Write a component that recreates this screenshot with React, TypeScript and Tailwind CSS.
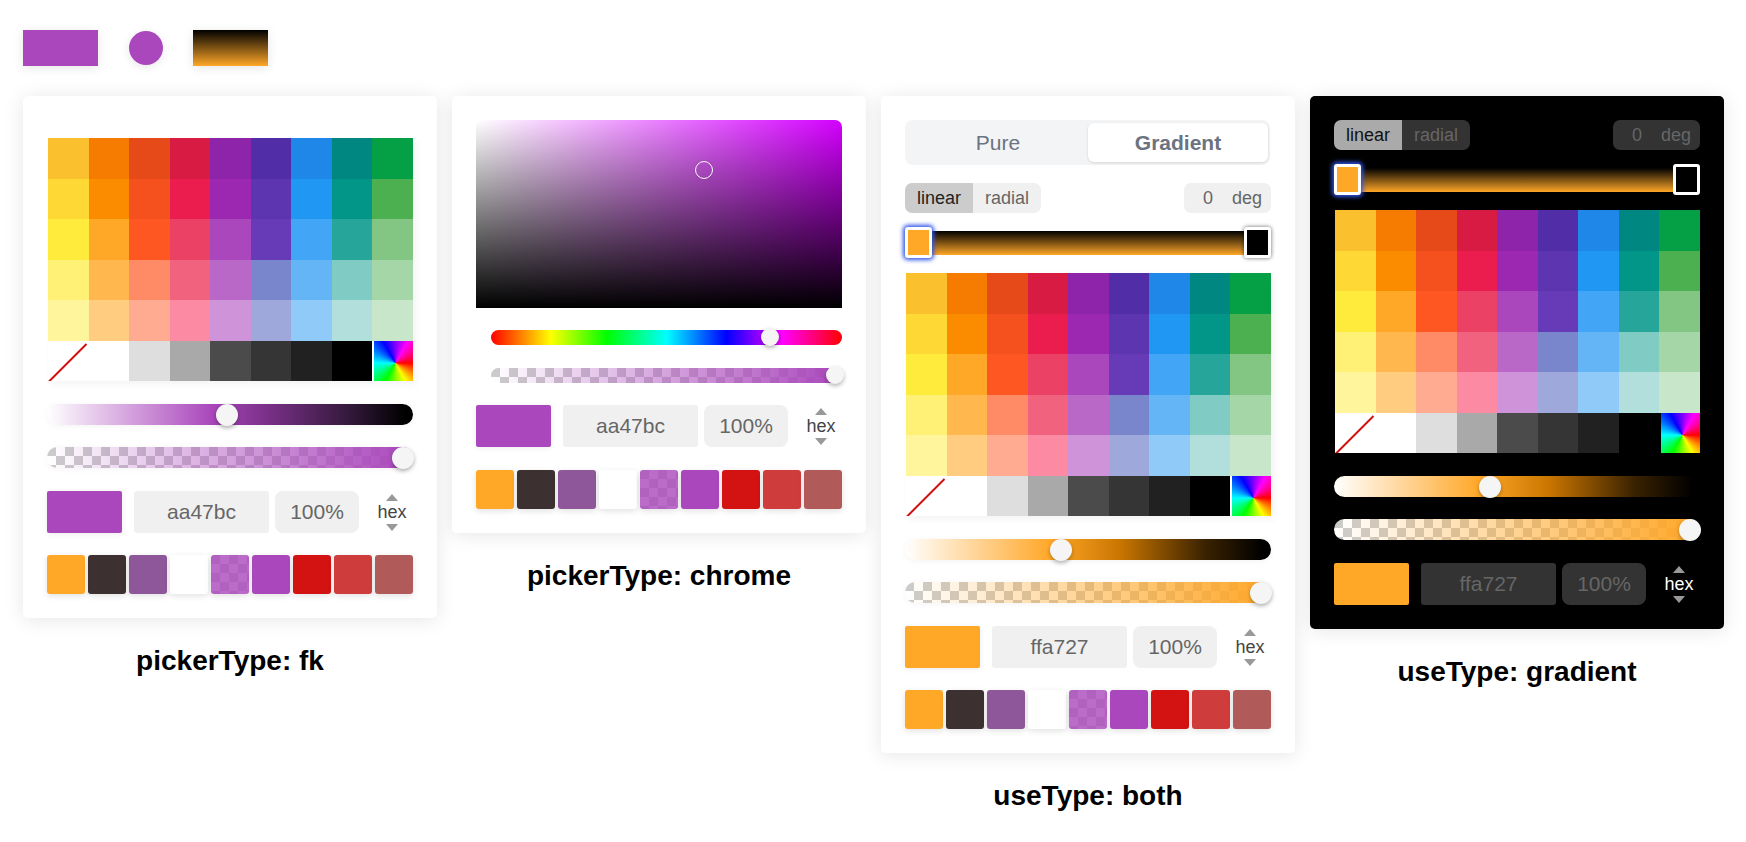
import React from "react";

const ROWS = [
  ["#fbc02d", "#f57c00", "#e64a19", "#d81b43", "#8e24aa", "#512da7", "#1f87e8", "#008781", "#05a045"],
  ["#fed835", "#fb8c00", "#f5511e", "#eb1d4e", "#9c27b0", "#5e35b1", "#2097f3", "#029688", "#4cb050"],
  ["#ffeb3c", "#ffa727", "#fe5722", "#eb4165", "#aa47bc", "#673bb7", "#42a5f6", "#26a59a", "#83c683"],
  ["#fff176", "#ffb74e", "#ff8a66", "#f1627e", "#b968c7", "#7986cc", "#64b5f6", "#80cbc4", "#a5d6a7"],
  ["#fff59c", "#ffcc80", "#ffab91", "#fb8aa2", "#ce93d8", "#9fa8da", "#90caf9", "#b2dfdc", "#c8e6ca"],
];
const GRAYS = ["#ffffff", "#dedede", "#a9a9a9", "#4b4b4b", "#353535", "#212121", "#000000"];
const PRESETS = ["#ffa727", "#3d3030", "#8e5799", "#ffffff", "", "#aa47bc", "#d31212", "#cf3c3c", "#b05a5a"];

const PURPLE = {
  swatch: "bg-[#aa47bc]",
  text: "aa47bc",
  hue: "bg-[linear-gradient(to_right,#ffffff,#aa47bc_45%,#7a3088_60%,#351a3d_82%,#000000_98%)]",
  alpha:
    "bg-[linear-gradient(to_right,rgba(170,71,188,0),#aa47bc),conic-gradient(#fff_25%,#ccc_0_50%,#fff_0_75%,#ccc_0)] bg-[length:100%_100%,18px_18px]",
};
const ORANGE = {
  swatch: "bg-[#ffa727]",
  text: "ffa727",
  hue: "bg-[linear-gradient(to_right,#ffffff,#ffa727_40%,#c87500_59%,#3a2200_82%,#000000_98%)]",
  alpha:
    "bg-[linear-gradient(to_right,rgba(255,167,39,0),#ffa727),conic-gradient(#fff_25%,#ccc_0_50%,#fff_0_75%,#ccc_0)] bg-[length:100%_100%,18px_18px]",
};
type Tone = typeof PURPLE;

function Thumb({ left, size, top }: { left: number; size: string; top: string }) {
  return (
    <div
      className={`absolute ${size} ${top} rounded-full bg-[#f5f5f5] shadow-[0_2px_4px_rgba(0,0,0,0.3)]`}
      style={{ left }}
    />
  );
}

function Palette({ dark }: { dark: boolean }) {
  return (
    <div className="ml-px h-[243px] grid grid-cols-9 grid-rows-6 shadow-[3px_3px_8px_rgba(0,0,0,0.05)]">
      {ROWS.flat().map((c, i) => (
        <div key={i} style={{ backgroundColor: c }} />
      ))}
      <div className="bg-white">
        <svg viewBox="0 0 40 40" className="w-full h-full block">
          <line x1="1" y1="40" x2="38" y2="3" stroke="#d40f0f" strokeWidth="2" />
        </svg>
      </div>
      {GRAYS.map((c, i) => (
        <div key={i} style={{ backgroundColor: c }} />
      ))}
      <div className={dark ? "bg-black pl-[1.5px]" : "bg-white pl-[1.5px]"}>
        <div className="w-full h-full bg-[conic-gradient(from_90deg_at_55%_55%,#ff0000,#ffff00,#00ff00,#00ffff,#0000ff,#ff00ff,#ff0000)]" />
      </div>
    </div>
  );
}

function Sliders({ tone, thumb }: { tone: Tone; thumb: number }) {
  return (
    <>
      <div className={`relative mt-[23px] h-[21px] rounded-full shadow-[0_1px_6px_rgba(0,0,0,0.05)] ${tone.hue}`}>
        <Thumb left={thumb} size="w-[22px] h-[22px]" top="top-0" />
      </div>
      <div className={`relative mt-[22px] h-[21px] rounded-full shadow-[0_1px_6px_rgba(0,0,0,0.05)] ${tone.alpha}`}>
        <Thumb left={345} size="w-[22px] h-[22px]" top="top-0" />
      </div>
    </>
  );
}

function InputRow({ tone, dark, mt }: { tone: Tone; dark: boolean; mt: string }) {
  const box = dark ? "bg-[#333333] text-[#666666]" : "bg-[#f0f0f0] text-[#666666]";
  return (
    <div className={`flex items-center h-[42px] ${mt}`}>
      <div className={`w-[75px] h-full rounded-[2px] shadow-[0_1px_6px_rgba(0,0,0,0.08)] ${tone.swatch}`} />
      <div className={`ml-3 w-[135px] h-full rounded-[3px] flex items-center justify-center text-[21px] ${box}`}>{tone.text}</div>
      <div className={`ml-1.5 w-[84px] h-full rounded-[8px] flex items-center justify-center text-[21px] ${box}`}>100%</div>
      <div className="flex-1 flex flex-col items-center pl-[12px]">
        <svg width="12" height="7" viewBox="0 0 12 7" className="block">
          <polygon points="6,0 12,7 0,7" fill="#999999" />
        </svg>
        <div className={`text-[18px] leading-[24px] my-[-0.5px] ${dark ? "text-white" : "text-[#444444]"}`}>hex</div>
        <svg width="12" height="7" viewBox="0 0 12 7" className="block">
          <polygon points="0,0 12,0 6,7" fill="#999999" />
        </svg>
      </div>
    </div>
  );
}

function Presets() {
  return (
    <div className="mt-[22px] flex justify-between h-[39px]">
      {PRESETS.map((c, i) =>
        c ? (
          <div key={i} className="w-[38px] h-full rounded-[3px] shadow-[0_2px_6px_rgba(0,0,0,0.12)]" style={{ backgroundColor: c }} />
        ) : (
          <div
            key={i}
            className="w-[38px] h-full rounded-[3px] shadow-[0_2px_6px_rgba(0,0,0,0.12)] bg-[linear-gradient(rgba(170,71,188,0.8),rgba(170,71,188,0.8)),conic-gradient(#fff_25%,#ccc_0_50%,#fff_0_75%,#ccc_0)] bg-[length:100%_100%,18px_18px]"
          />
        )
      )}
    </div>
  );
}

function GradientControls({ dark }: { dark: boolean }) {
  const idle = dark ? "bg-[#333333] text-[#666666]" : "bg-[#f0f0f0] text-[#666666]";
  const active = dark ? "bg-[#aaaaaa] text-[#111111]" : "bg-[#cccccc] text-[#222222]";
  return (
    <>
      <div className="flex justify-between h-[30px] text-[18px]">
        <div className="flex rounded-[7px] overflow-hidden">
          <div className={`w-[68px] flex items-center justify-center ${active}`}>linear</div>
          <div className={`w-[68px] flex items-center justify-center ${idle}`}>radial</div>
        </div>
        <div className={`w-[87px] rounded-[7px] flex items-center justify-end pr-[9px] gap-[19px] ${idle}`}>
          <span>0</span>
          <span>deg</span>
        </div>
      </div>
      <div className="relative mt-[18px] h-[24px] bg-[linear-gradient(to_bottom,#000000,#ffa727)]">
        <div className="absolute left-0 top-[-4px] w-[27px] h-[31px] rounded-[3px] border-[3px] border-white bg-[#ffa727] shadow-[0_0_4px_2px_#2f55e8]" />
        <div
          className={`absolute right-0 top-[-4px] w-[27px] h-[31px] rounded-[3px] border-[3px] border-white bg-black ${
            dark ? "" : "shadow-[0_0_4px_rgba(0,0,0,0.6)]"
          }`}
        />
      </div>
    </>
  );
}

function Panel({ dark, children }: { dark?: boolean; children: React.ReactNode }) {
  return (
    <div
      className={`w-[414px] rounded-[5px] p-6 shadow-[0_2px_20px_rgba(0,0,0,0.1)] ${dark ? "bg-black" : "bg-white"}`}
    >
      {children}
    </div>
  );
}

function Label({ children }: { children: React.ReactNode }) {
  return <div className="mt-[27px] text-center font-bold text-[28px] leading-[32px] text-black">{children}</div>;
}

export default function App() {
  return (
    <div className="min-h-[842px] bg-white px-[23px] pt-[30px] font-['Liberation_Sans',Arial,sans-serif]">
      <div className="flex items-start h-[36px]">
        <div className="w-[75px] h-[36px] bg-[#aa47bc] shadow-[0_2px_10px_rgba(0,0,0,0.1)]" />
        <div className="ml-[30.5px] mt-[0.5px] w-[34px] h-[34px] rounded-full bg-[#aa47bc] shadow-[0_2px_10px_rgba(0,0,0,0.1)]" />
        <div className="ml-[30.5px] w-[75px] h-[36px] bg-[linear-gradient(to_bottom,#000000,#ffa727)] shadow-[0_2px_10px_rgba(0,0,0,0.1)]" />
      </div>
      <div className="mt-[30px] flex items-start gap-[15px]">
        <div className="w-[414px]">
          <Panel>
            <div className="pt-[18px]">
              <Palette dark={false} />
              <Sliders tone={PURPLE} thumb={169} />
              <InputRow tone={PURPLE} dark={false} mt="mt-[23px]" />
              <Presets />
            </div>
          </Panel>
          <Label>pickerType: fk</Label>
        </div>

        <div className="w-[414px]">
          <Panel>
            <div className="relative h-[188px] rounded-t-[7px] bg-[linear-gradient(to_bottom,rgba(0,0,0,0),#000000),linear-gradient(to_right,#ffffff,#d400ff)]">
              <div className="absolute left-[219px] top-[41px] w-[18px] h-[18px] rounded-full border border-white shadow-[0_0_1px_rgba(0,0,0,0.6)]" />
            </div>
            <div className="ml-[15px]">
              <div className="relative mt-[22px] h-[15px] rounded-full bg-[linear-gradient(to_right,#ff0000,#ffff00_17%,#00ff00_33%,#00ffff_50%,#0000ff_67%,#ff00ff_83%,#ff0000)]">
                <Thumb left={270} size="w-[18px] h-[18px]" top="top-[-2px]" />
              </div>
              <div className={`relative mt-[23px] h-[15px] rounded-full ${PURPLE.alpha}`}>
                <Thumb left={335} size="w-[18px] h-[18px]" top="top-[-2px]" />
              </div>
            </div>
            <InputRow tone={PURPLE} dark={false} mt="mt-[22px]" />
            <div className="pt-px">
              <Presets />
            </div>
          </Panel>
          <Label>pickerType: chrome</Label>
        </div>

        <div className="w-[414px]">
          <Panel>
            <div className="mr-px flex h-[45px] rounded-[8px] bg-[#f3f4f6] pl-[3px] pr-[2px] py-[3px] text-[21px] text-[#6b7280]">
              <div className="flex-1 flex items-center justify-center">Pure</div>
              <div className="w-[180px] rounded-[6px] bg-white font-bold flex items-center justify-center shadow-[0_1px_3px_rgba(0,0,0,0.12)]">
                Gradient
              </div>
            </div>
            <div className="mt-[18px]">
              <GradientControls dark={false} />
            </div>
            <div className="mt-[18px]">
              <Palette dark={false} />
            </div>
            <Sliders tone={ORANGE} thumb={145} />
            <InputRow tone={ORANGE} dark={false} mt="mt-[23px]" />
            <Presets />
          </Panel>
          <Label>useType: both</Label>
        </div>

        <div className="w-[414px]">
          <Panel dark>
            <GradientControls dark />
            <div className="mt-[18px]">
              <Palette dark />
            </div>
            <Sliders tone={ORANGE} thumb={145} />
            <InputRow tone={ORANGE} dark mt="mt-[23px]" />
          </Panel>
          <Label>useType: gradient</Label>
        </div>
      </div>
    </div>
  );
}
